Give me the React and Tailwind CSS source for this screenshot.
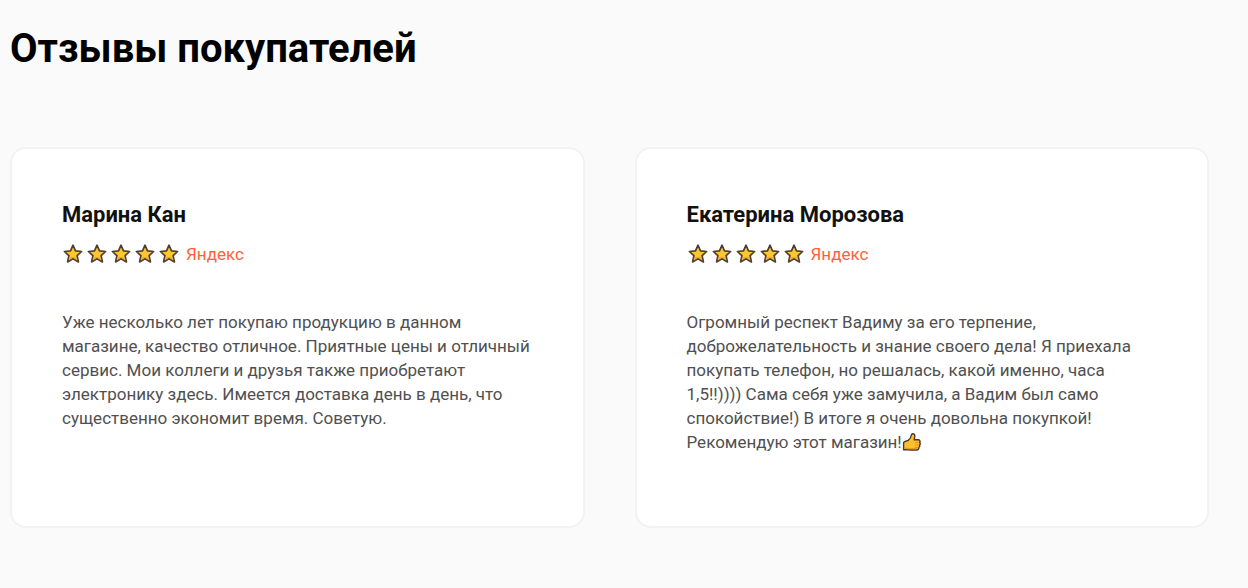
import React from "react";

const reviews = [
  {
    name: "Марина Кан",
    text: "Уже несколько лет покупаю продукцию в данном магазине, качество отличное. Приятные цены и отличный сервис. Мои коллеги и друзья также приобретают электронику здесь. Имеется доставка день в день, что существенно экономит время. Советую.",
  },
  {
    name: "Екатерина Морозова",
    text: "Огромный респект Вадиму за его терпение, доброжелательность и знание своего дела! Я приехала покупать телефон, но решалась, какой именно, часа 1,5!!)))) Сама себя уже замучила, а Вадим был само спокойствие!) В итоге я очень довольна покупкой! Рекомендую этот магазин!",
    thumb: true,
  },
];

function Star() {
  return (
    <svg className="size-5" viewBox="0 0 20 20" aria-hidden="true">
      <path
        d="M10 1.2 12.5 6.8 18.6 7.5 14.1 11.7 15.4 17.9 10 14.8 4.6 17.9 5.9 11.7 1.4 7.5 7.5 6.8Z"
        fill="#ffc632"
        stroke="#4d4036"
        strokeWidth="1.7"
        strokeLinejoin="round"
      />
      <path d="M5.6 16.4 10 13.8 14.4 16.4 13.9 13.9 10 12.6 6.1 13.9Z" fill="#f0ab2e" />
    </svg>
  );
}

function Thumb() {
  return (
    <svg className="inline size-5 align-text-bottom" viewBox="0 0 20 20" aria-hidden="true">
      <path
        d="M1.6 10.4C3 8.8 4.6 9.2 6.2 8.4 8 7 9 5.4 9.4 3 9.6 1.2 12.6 1.2 12.8 3.6 12.9 5.2 12.4 6.4 12.2 7.8H16.4C18.2 8 18.4 9.6 17.6 10.4 18.6 11.2 18.4 12.4 17.6 13 18 14 17.6 15 16.8 15.5 17 17 16.2 18 14.6 18H8.4C6 18 4.6 17.6 1.6 17.8Z"
        fill="#ffc02c"
        stroke="#46382f"
        strokeWidth="1.4"
        strokeLinejoin="round"
      />
      <path d="M2.6 16.2 7.4 16.6H15.4" fill="none" stroke="#e99a25" strokeWidth="1.3" />
      <path d="M13 10.4H17M13 13H17M12.8 15.4H16.4" fill="none" stroke="#e08d22" strokeWidth="0.8" />
    </svg>
  );
}

function Review({ name, text, thumb }) {
  return (
    <article className="min-h-[381px] rounded-2xl border-2 border-[#f2f2f2] bg-white px-[50px] py-[50px]">
      <h2 className="text-[22px] leading-8 font-bold text-[#111]">{name}</h2>
      <div className="mt-[9px] flex h-7 items-center gap-1 pl-px">
        {[0, 1, 2, 3, 4].map((i) => (
          <Star key={i} />
        ))}
        <a href="#yandex" className="ml-[3px] text-[17px] leading-6 text-[#ff6138]">Яндекс</a>
      </div>
      <p className="mt-[42px] text-[17px] leading-6 text-[#505050]">
        {text}
        {thumb && <Thumb />}
      </p>
    </article>
  );
}

export default function App() {
  return (
    <main className="min-h-screen bg-[#fafafa] pt-[25px] pr-[39px] pb-15 pl-[10px] font-['Roboto',sans-serif]">
      <h1 className="text-[40px] leading-12 font-bold text-black">Отзывы покупателей</h1>
      <section className="mt-[74px] grid grid-cols-2 gap-[50px]">
        {reviews.map((r) => (
          <Review key={r.name} {...r} />
        ))}
      </section>
    </main>
  );
}
